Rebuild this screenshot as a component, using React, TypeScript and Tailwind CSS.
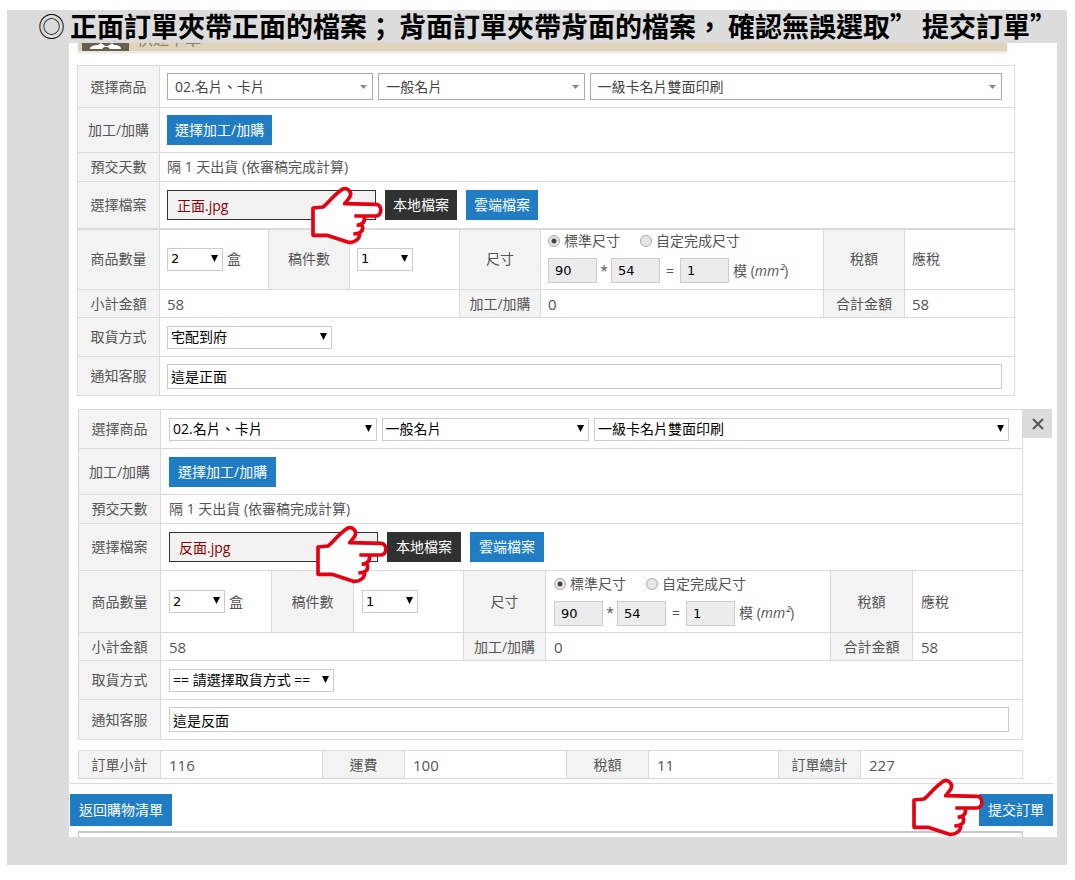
import React, { useId } from "react";

const TH = "border border-[#dadada] bg-[#f3f3f3] p-0 text-center align-middle font-normal";
const TD = "border border-[#dadada] p-0 align-middle";

const BLUE =
  "h-[30px] shrink-0 cursor-pointer whitespace-nowrap bg-[#217dc3] text-white hover:bg-[#1a6aa8]";
const BLACK =
  "h-[30px] shrink-0 cursor-pointer whitespace-nowrap bg-[#303232] text-white hover:bg-black";
const NUMBER_FONT = "font-['DejaVu_Sans','Noto_Sans_CJK_TC',sans-serif] text-[13px]";

function Arrow({ soft }: { soft?: boolean }) {
  return (
    <svg
      viewBox="0 0 8 7"
      preserveAspectRatio="none"
      className={
        soft
          ? "pointer-events-none absolute top-3 right-[6px] h-1 w-[7px] fill-[#888]"
          : "pointer-events-none absolute top-[7px] right-[5px] h-[7px] w-[7px] fill-black"
      }
      aria-hidden="true"
    >
      <path d="M0 0h8L4 7z" />
    </svg>
  );
}

type SelectProps = {
  label: string;
  options: string[];
  soft?: boolean;
  width?: string;
  id?: string;
};

function Select({ label, options, soft, width = "w-full", id }: SelectProps) {
  return (
    <div className={`relative shrink-0 ${width}`}>
      <select
        id={id}
        aria-label={label}
        className={
          soft
            ? "block h-[27px] w-full appearance-none border border-[#aaa] bg-white pr-4 pl-[7px] text-[#444]"
            : "block h-[23px] w-full appearance-none border border-[#ccc] bg-white pr-3 pl-[3px] text-black"
        }
      >
        {options.map((o) => (
          <option key={o}>{o}</option>
        ))}
      </select>
      <Arrow soft={soft} />
    </div>
  );
}

function Hand({ place }: { place: string }) {
  return (
    <svg
      viewBox="0 0 216 171"
      className={`pointer-events-none absolute h-[57px] w-[72px] overflow-visible ${place}`}
      aria-hidden="true"
    >
      <path
        fill="#fff"
        d="M6 63 L36 60 C54 46 66 26 92 8 C108 -1 124 14 117 29 C112 38 108 42 101 50 L196 52 C214 54 214 84 196 87 L160 88 C162 100 158 108 152 113 C160 128 154 136 146 141 C146 155 132 168 112 166 L48 145 L6 145 Z"
      />
      <path
        fill="none"
        stroke="#e60012"
        strokeWidth="11"
        strokeLinejoin="round"
        d="M130 87 L196 87 C214 84 214 54 196 52 L101 50 C108 42 112 38 117 29 C124 14 108 -1 92 8 C66 26 54 46 36 60 L6 63 L6 145 L48 145 L112 166 C132 168 146 155 146 141 M160 88 C163 102 157 113 137 115 M152 113 C161 129 150 140 127 141"
      />
    </svg>
  );
}

type Order = {
  file: string;
  note: string;
  pickup: string;
  soft: boolean;
};

const FRONT: Order = { file: "正面.jpg", note: "這是正面", pickup: "宅配到府", soft: true };
const BACK: Order = { file: "反面.jpg", note: "這是反面", pickup: "== 請選擇取貨方式 ==", soft: false };

function SizeBox({ label, value }: { label: string; value: string }) {
  return (
    <input
      aria-label={label}
      defaultValue={value}
      readOnly
      className={`h-[25px] w-[49px] border border-[#ccc] bg-[#ececec] pl-1.5 text-black ${NUMBER_FONT}`}
    />
  );
}

function OrderTable({ order }: { order: Order }) {
  const id = useId();
  const { soft } = order;
  const head = soft ? "w-[81px]" : "w-[82px]";
  const pad = soft ? "pl-[7px]" : "pl-2";
  const padRight = soft ? "pr-3" : "pr-[13px]";
  const buttonPad = soft ? "px-2" : "px-[9px]";
  const line = soft ? "border-b-2" : "";
  return (
    <table className="w-full table-fixed border-collapse">
      <colgroup>
        <col className="w-[82px]" />
        <col className={soft ? "w-[109px]" : "w-[111px]"} />
        <col className={head} />
        <col className="w-[110px]" />
        <col className={head} />
        <col />
        <col className={head} />
        <col className="w-[110px]" />
      </colgroup>
      <tbody>
        <tr className={soft ? "h-[42px]" : "h-[39px]"}>
          <th scope="row" className={TH}>選擇商品</th>
          <td colSpan={7} className={TD}>
            <div className={`grid grid-cols-[1fr_1fr_2fr] gap-[5px] ${pad} ${padRight}`}>
              <Select soft={soft} label="商品類別" options={["02.名片、卡片"]} />
              <Select soft={soft} label="商品種類" options={["一般名片"]} />
              <Select soft={soft} label="商品規格" options={["一級卡名片雙面印刷"]} />
            </div>
          </td>
        </tr>
        <tr className={soft ? "h-[45px]" : "h-[46px]"}>
          <th scope="row" className={TH}>加工/加購</th>
          <td colSpan={7} className={`${TD} ${pad}`}>
            <button type="button" className={`block ${buttonPad} ${BLUE}`}>選擇加工/加購</button>
          </td>
        </tr>
        <tr className="h-[29px]">
          <th scope="row" className={TH}>預交天數</th>
          <td colSpan={7} className={`${TD} ${pad}`}>隔 1 天出貨 (依審稿完成計算)</td>
        </tr>
        <tr className="h-[47px]">
          <th scope="row" className={`${TH} ${line}`}>
            <label htmlFor={`${id}file`}>選擇檔案</label>
          </th>
          <td colSpan={7} className={`${TD} ${line}`}>
            <div className={`relative flex items-center gap-[9px] ${pad}`}>
              <input
                id={`${id}file`}
                readOnly
                defaultValue={order.file}
                className="h-[30px] w-[209px] border border-[#333] bg-[#f2f2f2] pl-[9px] text-[#8b0000]"
              />
              <button type="button" className={`${buttonPad} ${BLACK}`}>本地檔案</button>
              <button type="button" className={`${buttonPad} ${BLUE}`}>雲端檔案</button>
              <Hand place={soft ? "-top-[3px] left-[151px]" : "-top-[6px] left-[155px]"} />
            </div>
          </td>
        </tr>
        <tr className={soft ? "h-[61px]" : "h-[62px]"}>
          <th scope="row" className={TH}>
            <label htmlFor={`${id}qty`}>商品數量</label>
          </th>
          <td className={TD}>
            <div className={`flex items-center gap-1 ${pad} ${NUMBER_FONT}`}>
              <Select id={`${id}qty`} label="商品數量" options={["2", "1", "3"]} width="w-14" />
              <span className="text-sm">盒</span>
            </div>
          </td>
          <th scope="row" className={TH}>
            <label htmlFor={`${id}drafts`}>稿件數</label>
          </th>
          <td className={TD}>
            <div className={`${pad} ${NUMBER_FONT}`}>
              <Select id={`${id}drafts`} label="稿件數" options={["1", "2", "3"]} width="w-14" />
            </div>
          </td>
          <th scope="row" className={TH}>尺寸</th>
          <td className={TD}>
            <div className={`flex flex-col gap-[7px] pb-1 ${pad}`}>
              <div className="flex items-center gap-5 leading-5">
                {["標準尺寸", "自定完成尺寸"].map((t, i) => (
                  <label key={t} className="flex items-center gap-1">
                    <input
                      type="radio"
                      name={`${id}size`}
                      defaultChecked={i === 0}
                      className="size-3 appearance-none rounded-full border border-[#aaa] bg-[#e6e6e6] checked:bg-[radial-gradient(circle,#444_2px,#e6e6e6_3px)]"
                    />
                    {t}
                  </label>
                ))}
              </div>
              <div className="flex items-center">
                <SizeBox label="寬" value="90" />
                <span className="w-3.5 text-center">*</span>
                <SizeBox label="高" value="54" />
                <span className="w-5 text-center">=</span>
                <SizeBox label="模數" value="1" />
                <span className="ml-1">模 (<i>mm²</i>)</span>
              </div>
            </div>
          </td>
          <th scope="row" className={TH}>稅額</th>
          <td className={`${TD} ${pad}`}>應稅</td>
        </tr>
        <tr className="h-[28px]">
          <th scope="row" className={TH}>小計金額</th>
          <td colSpan={3} className={`${TD} ${pad} text-[15px]`}>58</td>
          <th scope="row" className={TH}>加工/加購</th>
          <td className={`${TD} ${pad} text-[15px]`}>0</td>
          <th scope="row" className={TH}>合計金額</th>
          <td className={`${TD} ${pad} text-[15px]`}>58</td>
        </tr>
        <tr className="h-[39px]">
          <th scope="row" className={TH}>
            <label htmlFor={`${id}pickup`}>取貨方式</label>
          </th>
          <td colSpan={7} className={`${TD} ${pad}`}>
            <Select id={`${id}pickup`} label="取貨方式" options={[order.pickup]} width="w-[165px]" />
          </td>
        </tr>
        <tr className={soft ? "h-[39px]" : "h-[40px]"}>
          <th scope="row" className={TH}>
            <label htmlFor={`${id}note`}>通知客服</label>
          </th>
          <td colSpan={7} className={`${TD} ${pad} ${padRight}`}>
            <input
              id={`${id}note`}
              defaultValue={order.note}
              className="block h-[25px] w-full border border-[#ccc] bg-white pl-[3px] text-black"
            />
          </td>
        </tr>
      </tbody>
    </table>
  );
}

const TOTALS: [string, string][] = [
  ["訂單小計", "116"],
  ["運費", "100"],
  ["稅額", "11"],
  ["訂單總計", "227"],
];

export default function App() {
  return (
    <div className="bg-white pt-2.5 pr-2 pb-[15px] pl-[7px] font-['Open_Sans','Noto_Sans_CJK_TC',sans-serif] text-sm leading-5 text-[#555]">
      <div className="bg-[#dcdcdc] pb-7">
        <h1
          lang="zh-Hant"
          className="flex h-[33px] items-center gap-[5px] pb-0.5 pl-[31px] font-['Noto_Sans_CJK_TC',sans-serif] text-[27px] leading-10 font-bold whitespace-nowrap text-black"
        >
          <span className="font-light">◎</span>
          <span>正面訂單夾帶正面的檔案；</span>
          <span>背面訂單夾帶背面的檔案，</span>
          <span>確認無誤選取”</span>
          <span>提交訂單”</span>
        </h1>

        <main className="mr-2.5 ml-[62px] bg-white">
          <div className="mr-[50px] ml-[9px] flex h-[9px] items-end gap-2 overflow-hidden border-b border-[#efe6d4] bg-[#dfd3ba] pl-1 shadow-sm">
            <svg viewBox="0 0 47 8" className="h-2 w-[47px] shrink-0" aria-hidden="true">
              <path fill="#666053" d="M0 0h47v8H0z" />
              <path fill="#fff" d="M8 6c0-3 4-4 8-4l3-2 4 3h3l4-3 2 2c4 0 7 1 7 4z" />
              <path fill="#666053" d="M20 6l2-2h4l2 2z" />
            </svg>
            <h2 className="mb-0.5 text-base leading-5 text-[#8c7f68]">快速下單</h2>
          </div>

          <div className="mt-[13px] mr-[42px] ml-2">
            <OrderTable order={FRONT} />
          </div>

          <div className="mt-[13px] mr-[5px] ml-[9px] flex items-start">
            <div className="min-w-0 flex-1">
              <OrderTable order={BACK} />
            </div>
            <button
              type="button"
              aria-label="移除訂單"
              className="flex h-[29px] w-[29px] shrink-0 cursor-pointer items-center justify-center bg-[#dcdcdc]"
            >
              <svg viewBox="0 0 12 12" className="size-3 stroke-[#555]" aria-hidden="true">
                <path d="M1 1l10 10M11 1L1 11" strokeWidth="2" />
              </svg>
            </button>
          </div>

          <div className="mt-2.5 mr-[34px] ml-[9px]">
            <table className="w-full table-fixed border-collapse">
              <colgroup>
                <col className="w-[82px]" />
                <col />
                <col className="w-[82px]" />
                <col />
                <col className="w-[82px]" />
                <col className="w-[130px]" />
                <col className="w-[82px]" />
                <col />
              </colgroup>
              <tbody>
                <tr className="h-[28px]">
                  {TOTALS.map(([k, v]) => (
                    <React.Fragment key={k}>
                      <th scope="row" className={TH}>{k}</th>
                      <td className={`${TD} pl-2 text-[15px]`}>{v}</td>
                    </React.Fragment>
                  ))}
                </tr>
              </tbody>
            </table>
          </div>

          <div className="relative mt-1 mr-1 ml-px flex justify-between border-t border-[#dadada] pt-2.5 text-white">
            <button type="button" className="h-8 cursor-pointer bg-[#217dc3] px-[9px]">返回購物清單</button>
            <button type="button" className="h-8 cursor-pointer bg-[#217dc3] px-[9px]">提交訂單</button>
            <Hand place="-top-[5px] right-[69px]" />
          </div>
          <div className="mt-[5px] mr-[34px] ml-[9px] h-1.5 border-x border-t-2 border-[#c8c8c8]" />
        </main>
      </div>
    </div>
  );
}
